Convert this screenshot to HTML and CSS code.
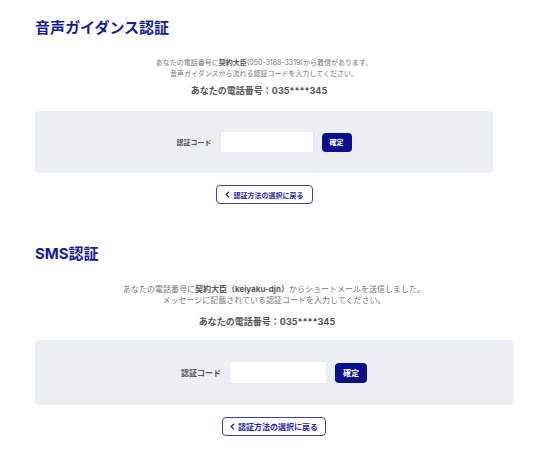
FILE: index.html
```
<!DOCTYPE html>
<html lang="ja">
<head>
  <meta charset="UTF-8">
  <meta name="viewport" content="width=device-width, initial-scale=1.0">
  <title>認証</title>
  <link rel="stylesheet" href="styles.css">
</head>
<body>
  <main class="page">
    <section class="auth auth-voice">
      <h2 class="auth-title">音声ガイダンス認証</h2>
      <p class="auth-text">あなたの電話番号に<strong>契約大臣</strong>(050-3188-3319)から着信があります。<br>音声ガイダンスから流れる認証コードを入力してください。</p>
      <p class="auth-phone">あなたの電話番号：035****345</p>
      <form class="auth-form">
        <label class="auth-label" for="voice-code">認証コード</label>
        <input class="auth-input" id="voice-code" type="text">
        <button class="auth-submit" type="button">確定</button>
      </form>
      <button class="auth-back" type="button">
        <svg class="auth-arrow" viewBox="0 0 5 7" aria-hidden="true"><path d="M4 0.8 L1.2 3.5 L4 6.2"/></svg>
        認証方法の選択に戻る
      </button>
    </section>

    <section class="auth auth-sms">
      <h2 class="auth-title">SMS認証</h2>
      <p class="auth-text">あなたの電話番号に<strong>契約大臣（keiyaku-djn）</strong>からショートメールを送信しました。<br>メッセージに記載されている認証コードを入力してください。</p>
      <p class="auth-phone">あなたの電話番号：035****345</p>
      <form class="auth-form">
        <label class="auth-label" for="sms-code">認証コード</label>
        <input class="auth-input" id="sms-code" type="text">
        <button class="auth-submit" type="button">確定</button>
      </form>
      <button class="auth-back" type="button">
        <svg class="auth-arrow" viewBox="0 0 5 7" aria-hidden="true"><path d="M4 0.8 L1.2 3.5 L4 6.2"/></svg>
        認証方法の選択に戻る
      </button>
    </section>
  </main>
</body>
</html>
```
FILE: styles.css
```
* {
  box-sizing: border-box;
}

body {
  margin: 0;
  background-color: #fff;
  font-family: Inter, "Noto Sans CJK JP", sans-serif;
  color: #555;
}

.page {
  padding: 17px 26px 16px 35px;
}

.auth {
  display: flex;
  flex-direction: column;
  align-items: center;
  font-size: 7px;
}

.auth-voice {
  margin: 0 20px 39px 0;
}

.auth-sms {
  font-size: 8px;
}

.auth-title {
  align-self: flex-start;
  margin: 0 0 18px;
  font-size: 15px;
  line-height: 22px;
  color: #151a98;
}

.auth-text {
  margin: 0;
  text-align: center;
  line-height: 11px;
  color: #777;
}

.auth-text strong {
  color: #555;
}

.auth-phone {
  margin: 5px 0 13px;
  padding-right: 10px;
  font-size: 9px;
  font-weight: bold;
  line-height: 14px;
}

.auth-form {
  display: flex;
  align-items: center;
  justify-content: center;
  gap: 8px;
  width: 100%;
  padding: 20px 0;
  border-radius: 4px;
  background-color: #ebeef3;
}

.auth-label {
  font-weight: bold;
}

.auth-input {
  width: 94px;
  height: 22px;
  padding: 0 6px;
  border: 1px solid #e8ebf0;
  border-radius: 1px;
  background-color: #fff;
  font: inherit;
}

.auth-submit {
  height: 19px;
  padding: 0 8px;
  border: none;
  border-radius: 4px;
  background-color: #0b0e8c;
  font: inherit;
  font-weight: bold;
  color: #fff;
}

.auth-back {
  display: flex;
  align-items: center;
  gap: 4px;
  height: 19px;
  margin-top: 12px;
  padding: 0 8px;
  border: 1px solid #3d41ae;
  border-radius: 4px;
  background-color: #fff;
  font: inherit;
  font-weight: bold;
  color: #2327a0;
}

.auth-arrow {
  width: 5px;
  height: 7px;
  fill: none;
  stroke: currentColor;
  stroke-width: 1.3;
}

.auth-sms .auth-title {
  margin-bottom: 19px;
}

.auth-sms .auth-phone {
  margin: 9px 0 11px;
  padding-right: 14px;
}

.auth-sms .auth-form {
  padding: 21px 0;
}

.auth-sms .auth-input {
  width: 98px;
  height: 23px;
}

.auth-sms .auth-submit {
  height: 20px;
}

.auth-sms .auth-back {
  gap: 3px;
  padding: 0 7px;
}
```
